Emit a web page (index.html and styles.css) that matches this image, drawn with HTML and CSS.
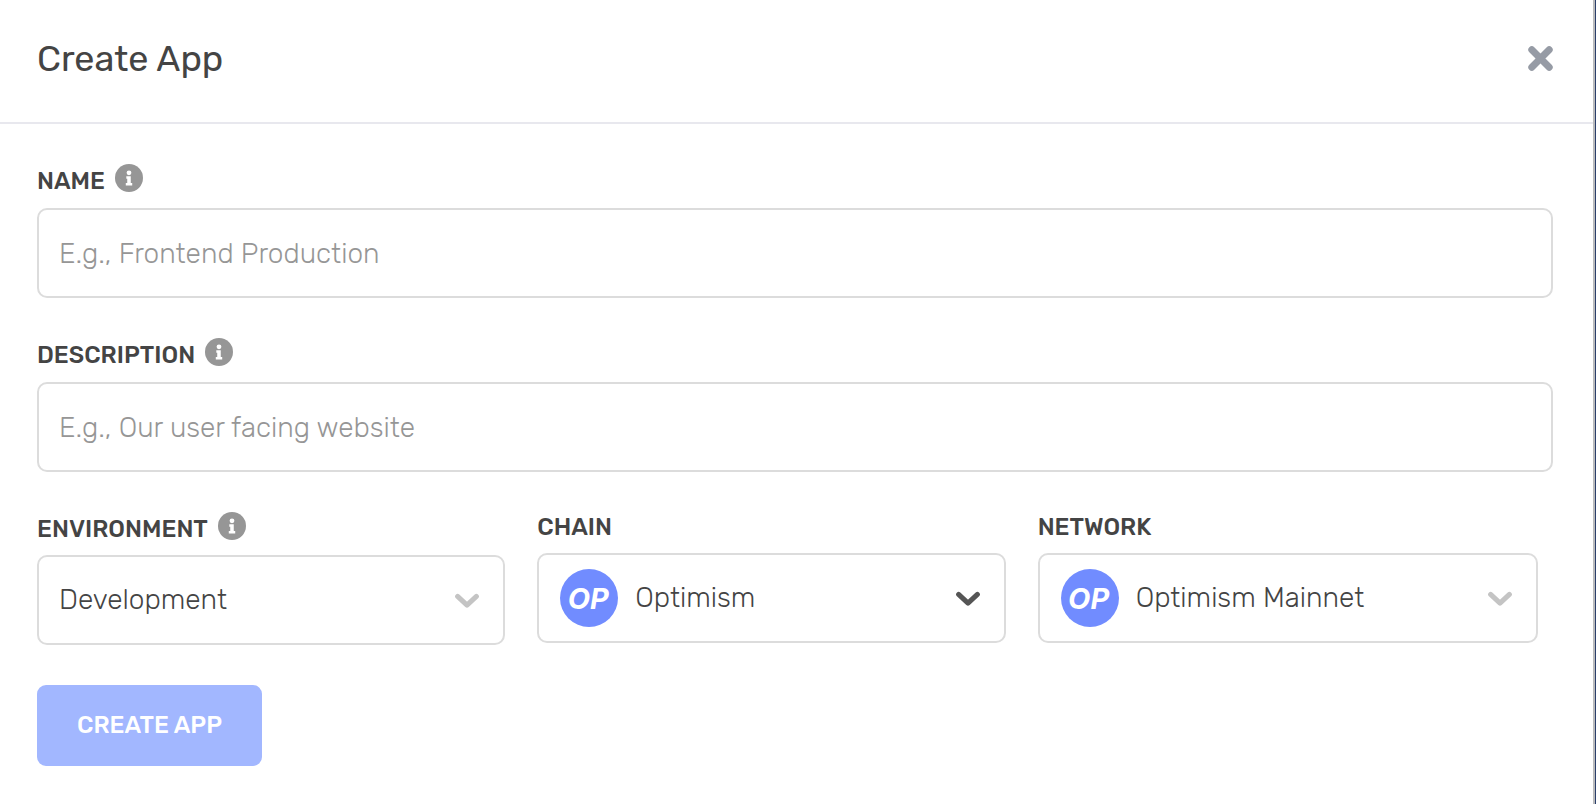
FILE: index.html
```html
<!DOCTYPE html>
<html lang="en">
<head>
<meta charset="utf-8">
<meta name="viewport" content="width=device-width, initial-scale=1">
<title>Create App</title>
<link rel="stylesheet" href="styles.css">
</head>
<body>
<svg class="sprite" aria-hidden="true">
  <symbol id="info" viewBox="0 0 27 27">
    <circle class="info-disc" cx="13.5" cy="13.5" r="13.5"/>
    <circle class="info-mark" cx="13.5" cy="8.5" r="2.3"/>
    <path class="info-mark" d="M10.9 11.8H15.2V18.4H16.6V20.8H10.4V18.4H11.8V14.2H10.9Z"/>
  </symbol>
  <symbol id="chevron" viewBox="0 0 24 16">
    <path class="chevron-line" d="M2.6 4.4 12 13.2 21.4 4.4"/>
  </symbol>
</svg>
<main class="dialog">
  <header class="dialog-header">
    <h1 class="title">Create App</h1>
    <button class="close" type="button" aria-label="Close">
      <svg class="close-icon" viewBox="0 0 25 25" aria-hidden="true"><path d="M3.8 3.8 21.2 21.2M21.2 3.8 3.8 21.2"/></svg>
    </button>
  </header>
  <form class="form">
    <div class="field">
      <div class="label-row">
        <label class="label" for="name">NAME</label>
        <svg class="info"><use href="#info"/></svg>
      </div>
      <input class="box text-input" id="name" type="text" placeholder="E.g., Frontend Production">
    </div>
    <div class="field">
      <div class="label-row">
        <label class="label" for="description">DESCRIPTION</label>
        <svg class="info"><use href="#info"/></svg>
      </div>
      <input class="box text-input" id="description" type="text" placeholder="E.g., Our user facing website">
    </div>
    <div class="selects">
      <div class="field select-field">
        <div class="label-row">
          <label class="label" for="environment">ENVIRONMENT</label>
          <svg class="info"><use href="#info"/></svg>
        </div>
        <div class="box select-box">
          <select class="select" id="environment"><option>Development</option></select>
          <svg class="chevron" aria-hidden="true"><use href="#chevron"/></svg>
        </div>
      </div>
      <div class="field select-field">
        <div class="label-row plain">
          <label class="label" for="chain">CHAIN</label>
        </div>
        <div class="box select-box">
          <span class="badge" aria-hidden="true">OP</span>
          <select class="select" id="chain"><option>Optimism</option></select>
          <svg class="chevron active" aria-hidden="true"><use href="#chevron"/></svg>
        </div>
      </div>
      <div class="field select-field">
        <div class="label-row plain">
          <label class="label" for="network">NETWORK</label>
        </div>
        <div class="box select-box">
          <span class="badge" aria-hidden="true">OP</span>
          <select class="select" id="network"><option>Optimism Mainnet</option></select>
          <svg class="chevron" aria-hidden="true"><use href="#chevron"/></svg>
        </div>
      </div>
    </div>
    <button class="submit" type="submit">CREATE APP</button>
  </form>
</main>
</body>
</html>
```
FILE: styles.css
```css
* {
  box-sizing: border-box;
}

body {
  margin: 0;
  background: #fff;
  color: #444;
  font-family: Rubik, Roboto, sans-serif;
}

.sprite {
  display: none;
}

.dialog {
  min-height: 100vh;
  border-right: 2px solid #bbbcbe;
  margin-right: 1px;
  box-shadow: 1px 0 0 #2b3f6b;
}

.dialog-header {
  display: flex;
  align-items: flex-start;
  justify-content: space-between;
  padding: 35px 40px 39px 37px;
  border-bottom: 2px solid #e8e8ee;
}

.title {
  margin: 0;
  font-size: 36px;
  font-weight: 400;
  line-height: 48px;
}

.close {
  display: flex;
  padding: 11px 0 0;
  border: 0;
  background: none;
}

.close-icon {
  width: 25px;
  height: 25px;
  fill: none;
  stroke: #969ba5;
  stroke-width: 7;
  stroke-linecap: round;
}

.form {
  display: flex;
  flex-direction: column;
  gap: 40px;
  padding: 40px 40px 38px 37px;
}

.field {
  display: flex;
  flex-direction: column;
  gap: 10px;
  min-width: 0;
}

.select-field {
  gap: 9px;
}

.label-row {
  display: flex;
  align-items: flex-start;
  gap: 10px;
  line-height: 34px;
}

.plain {
  padding-bottom: 2px;
  line-height: 30px;
}

.label {
  font-size: 24px;
  font-weight: 500;
}

.info {
  width: 28px;
  height: 28px;
}

.info-disc {
  fill: #969696;
}

.info-mark {
  fill: #fff;
}

.box {
  width: 100%;
  height: 90px;
  border: 2px solid #dcdcdc;
  border-radius: 10px;
  background: #fff;
}

.text-input {
  padding: 0 20px;
  color: #444;
  font: 300 28px Rubik, Roboto, sans-serif;
}

.text-input::placeholder {
  color: #969696;
  opacity: 1;
}

.selects {
  display: grid;
  grid-template-columns: 468fr 468fr 500fr;
  align-items: start;
  gap: 32px;
  padding-right: 15px;
}

.select-box {
  display: flex;
  align-items: center;
  gap: 17px;
  padding: 0 24px 0 20px;
}

.select {
  flex: 1;
  min-width: 0;
  height: 100%;
  padding: 0 0 2px;
  border: 0;
  appearance: none;
  background: none;
  color: #444;
  font: 300 28px Rubik, Roboto, sans-serif;
}

.badge {
  display: grid;
  place-items: center;
  width: 58px;
  height: 58px;
  margin-left: 1px;
  padding-right: 2px;
  border-radius: 50%;
  background: #718cff;
  color: #fff;
  font: italic 700 29px Inter, sans-serif;
}

.chevron {
  width: 24px;
  height: 16px;
  color: #c4c4c4;
}

.active {
  color: #555;
}

.chevron-line {
  fill: none;
  stroke: currentColor;
  stroke-width: 5;
  stroke-linecap: round;
  stroke-linejoin: round;
}

.submit {
  align-self: flex-start;
  padding: 24px 40px;
  border: 0;
  border-radius: 9px;
  background: #a2b7ff;
  color: #fff;
  font: 500 24px/33px Rubik, Roboto, sans-serif;
}
```
